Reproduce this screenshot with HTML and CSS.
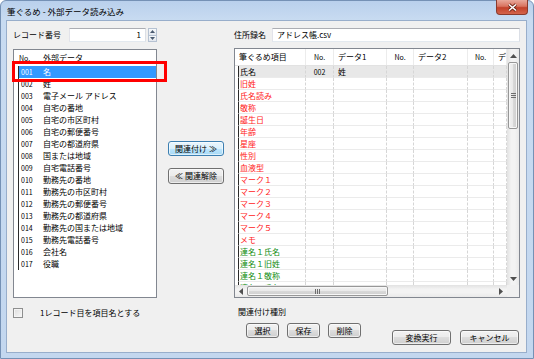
FILE: index.html
```html
<!DOCTYPE html>
<html lang="ja">
<head>
    <meta charset="UTF-8">
    <meta name="viewport" content="width=device-width, initial-scale=1.0">
    <title>筆ぐるめ - 外部データ読み込み</title>
    <link rel="stylesheet" href="styles.css">
</head>
<body>
    <div class="window">
        <div class="titlebar">
            <span class="title">筆ぐるめ - 外部データ読み込み</span>
            <div class="close-btn">
                <svg width="11" height="9" viewBox="0 0 11 9">
                    <path d="M2 1.5 L9 7.5 M9 1.5 L2 7.5" stroke="#6b2315" stroke-width="3.2"/>
                    <path d="M2 1.5 L9 7.5 M9 1.5 L2 7.5" stroke="#ffffff" stroke-width="1.6"/>
                </svg>
            </div>
        </div>

        <div class="client">
            <!-- 左: 外部データ -->
            <div class="col-left">
                <div class="field-row">
                    <span class="label rec-label">レコード番号</span>
                    <div class="textbox spin-value">1</div>
                    <div class="spin">
                        <div class="spin-btn"><svg width="5" height="3" viewBox="0 0 5 3"><path d="M0 3 L2.5 0 L5 3Z" fill="#4a5a70"/></svg></div>
                        <div class="spin-btn"><svg width="5" height="3" viewBox="0 0 5 3"><path d="M0 0 L2.5 3 L5 0Z" fill="#4a5a70"/></svg></div>
                    </div>
                </div>

                <div class="listbox">
                    <div class="lb-head"><span class="lb-no">No.</span><span class="lb-name">外部データ</span></div>
                    <div class="lb-row selected"><span class="lb-no">001</span><span class="lb-name">名</span></div>
                    <div class="lb-row"><span class="lb-no">002</span><span class="lb-name">姓</span></div>
                    <div class="lb-row"><span class="lb-no">003</span><span class="lb-name">電子メール アドレス</span></div>
                    <div class="lb-row"><span class="lb-no">004</span><span class="lb-name">自宅の番地</span></div>
                    <div class="lb-row"><span class="lb-no">005</span><span class="lb-name">自宅の市区町村</span></div>
                    <div class="lb-row"><span class="lb-no">006</span><span class="lb-name">自宅の郵便番号</span></div>
                    <div class="lb-row"><span class="lb-no">007</span><span class="lb-name">自宅の都道府県</span></div>
                    <div class="lb-row"><span class="lb-no">008</span><span class="lb-name">国または地域</span></div>
                    <div class="lb-row"><span class="lb-no">009</span><span class="lb-name">自宅電話番号</span></div>
                    <div class="lb-row"><span class="lb-no">010</span><span class="lb-name">勤務先の番地</span></div>
                    <div class="lb-row"><span class="lb-no">011</span><span class="lb-name">勤務先の市区町村</span></div>
                    <div class="lb-row"><span class="lb-no">012</span><span class="lb-name">勤務先の郵便番号</span></div>
                    <div class="lb-row"><span class="lb-no">013</span><span class="lb-name">勤務先の都道府県</span></div>
                    <div class="lb-row"><span class="lb-no">014</span><span class="lb-name">勤務先の国または地域</span></div>
                    <div class="lb-row"><span class="lb-no">015</span><span class="lb-name">勤務先電話番号</span></div>
                    <div class="lb-row"><span class="lb-no">016</span><span class="lb-name">会社名</span></div>
                    <div class="lb-row"><span class="lb-no">017</span><span class="lb-name">役職</span></div>
                    <div class="mark-box"></div>
                </div>

                <div class="check-row">
                    <span class="checkbox"></span>
                    <span class="check-label">1レコード目を項目名とする</span>
                </div>
            </div>

            <!-- 中央ボタン -->
            <div class="col-mid">
                <button type="button" class="btn btn-default btn-link">関連付け ≫</button>
                <button type="button" class="btn btn-unlink">≪ 関連解除</button>
            </div>

            <!-- 右: 筆ぐるめ項目 -->
            <div class="col-right">
                <div class="field-row">
                    <span class="label file-label">住所録名</span>
                    <div class="textbox file-name">アドレス帳.csv</div>
                </div>

                <div class="grid">
                    <div class="grid-body">
                        <div class="g-head">
                            <span class="cell c1">筆ぐるめ項目</span>
                            <span class="cell c2">No.</span>
                            <span class="cell c3">データ1</span>
                            <span class="cell c4">No.</span>
                            <span class="cell c5">データ2</span>
                            <span class="cell c6">No.</span>
                            <span class="cell c7">デ</span>
                        </div>
                        <div class="g-row current"><span class="cell c1">氏名</span><span class="cell c2">002</span><span class="cell c3">姓</span><span class="cell c4"></span><span class="cell c5"></span><span class="cell c6"></span><span class="cell c7"></span></div>
                        <div class="g-row red"><span class="cell c1">旧姓</span><span class="cell c2"></span><span class="cell c3"></span><span class="cell c4"></span><span class="cell c5"></span><span class="cell c6"></span><span class="cell c7"></span></div>
                        <div class="g-row red"><span class="cell c1">氏名読み</span><span class="cell c2"></span><span class="cell c3"></span><span class="cell c4"></span><span class="cell c5"></span><span class="cell c6"></span><span class="cell c7"></span></div>
                        <div class="g-row red"><span class="cell c1">敬称</span><span class="cell c2"></span><span class="cell c3"></span><span class="cell c4"></span><span class="cell c5"></span><span class="cell c6"></span><span class="cell c7"></span></div>
                        <div class="g-row red"><span class="cell c1">誕生日</span><span class="cell c2"></span><span class="cell c3"></span><span class="cell c4"></span><span class="cell c5"></span><span class="cell c6"></span><span class="cell c7"></span></div>
                        <div class="g-row red"><span class="cell c1">年齢</span><span class="cell c2"></span><span class="cell c3"></span><span class="cell c4"></span><span class="cell c5"></span><span class="cell c6"></span><span class="cell c7"></span></div>
                        <div class="g-row red"><span class="cell c1">星座</span><span class="cell c2"></span><span class="cell c3"></span><span class="cell c4"></span><span class="cell c5"></span><span class="cell c6"></span><span class="cell c7"></span></div>
                        <div class="g-row red"><span class="cell c1">性別</span><span class="cell c2"></span><span class="cell c3"></span><span class="cell c4"></span><span class="cell c5"></span><span class="cell c6"></span><span class="cell c7"></span></div>
                        <div class="g-row red"><span class="cell c1">血液型</span><span class="cell c2"></span><span class="cell c3"></span><span class="cell c4"></span><span class="cell c5"></span><span class="cell c6"></span><span class="cell c7"></span></div>
                        <div class="g-row red"><span class="cell c1">マーク１</span><span class="cell c2"></span><span class="cell c3"></span><span class="cell c4"></span><span class="cell c5"></span><span class="cell c6"></span><span class="cell c7"></span></div>
                        <div class="g-row red"><span class="cell c1">マーク２</span><span class="cell c2"></span><span class="cell c3"></span><span class="cell c4"></span><span class="cell c5"></span><span class="cell c6"></span><span class="cell c7"></span></div>
                        <div class="g-row red"><span class="cell c1">マーク３</span><span class="cell c2"></span><span class="cell c3"></span><span class="cell c4"></span><span class="cell c5"></span><span class="cell c6"></span><span class="cell c7"></span></div>
                        <div class="g-row red"><span class="cell c1">マーク４</span><span class="cell c2"></span><span class="cell c3"></span><span class="cell c4"></span><span class="cell c5"></span><span class="cell c6"></span><span class="cell c7"></span></div>
                        <div class="g-row red"><span class="cell c1">マーク５</span><span class="cell c2"></span><span class="cell c3"></span><span class="cell c4"></span><span class="cell c5"></span><span class="cell c6"></span><span class="cell c7"></span></div>
                        <div class="g-row red"><span class="cell c1">メモ</span><span class="cell c2"></span><span class="cell c3"></span><span class="cell c4"></span><span class="cell c5"></span><span class="cell c6"></span><span class="cell c7"></span></div>
                        <div class="g-row green"><span class="cell c1">連名１氏名</span><span class="cell c2"></span><span class="cell c3"></span><span class="cell c4"></span><span class="cell c5"></span><span class="cell c6"></span><span class="cell c7"></span></div>
                        <div class="g-row green"><span class="cell c1">連名１旧姓</span><span class="cell c2"></span><span class="cell c3"></span><span class="cell c4"></span><span class="cell c5"></span><span class="cell c6"></span><span class="cell c7"></span></div>
                        <div class="g-row green"><span class="cell c1">連名１敬称</span><span class="cell c2"></span><span class="cell c3"></span><span class="cell c4"></span><span class="cell c5"></span><span class="cell c6"></span><span class="cell c7"></span></div>
                        <div class="g-row green"><span class="cell c1">連名２氏名</span><span class="cell c2"></span><span class="cell c3"></span><span class="cell c4"></span><span class="cell c5"></span><span class="cell c6"></span><span class="cell c7"></span></div>
                    </div>

                    <div class="vscroll">
                        <div class="sb-arrow"><svg width="7" height="4" viewBox="0 0 7 4"><path d="M0 4 L3.5 0 L7 4Z" fill="#505050"/></svg></div>
                        <div class="thumb v-thumb">
                            <svg width="5" height="5" viewBox="0 0 5 5"><path d="M0 0.5 H5 M0 2.5 H5 M0 4.5 H5" stroke="#6e6e6e" stroke-width="1"/></svg>
                        </div>
                        <div class="sb-space"></div>
                        <div class="sb-arrow"><svg width="7" height="4" viewBox="0 0 7 4"><path d="M0 0 L3.5 4 L7 0Z" fill="#505050"/></svg></div>
                    </div>
                    <div class="hscroll">
                        <div class="sb-arrow"><svg width="4" height="7" viewBox="0 0 4 7"><path d="M4 0 L0 3.5 L4 7Z" fill="#505050"/></svg></div>
                        <div class="thumb h-thumb">
                            <svg width="5" height="5" viewBox="0 0 5 5"><path d="M0.5 0 V5 M2.5 0 V5 M4.5 0 V5" stroke="#6e6e6e" stroke-width="1"/></svg>
                        </div>
                        <div class="sb-space"></div>
                        <div class="sb-arrow"><svg width="4" height="7" viewBox="0 0 4 7"><path d="M0 0 L4 3.5 L0 7Z" fill="#505050"/></svg></div>
                    </div>
                    <div class="corner"></div>
                </div>

                <div class="bottom">
                    <div class="link-group">
                        <div class="group-label">関連付け種別</div>
                        <div class="btn-row">
                            <button type="button" class="btn btn-small">選択</button>
                            <button type="button" class="btn btn-small">保存</button>
                            <button type="button" class="btn btn-small">削除</button>
                        </div>
                    </div>
                    <div class="action-row">
                        <button type="button" class="btn btn-wide">変換実行</button>
                        <button type="button" class="btn btn-wide">キャンセル</button>
                    </div>
                </div>
            </div>
        </div>
    </div>
</body>
</html>
```

FILE: styles.css
```css
* {
    box-sizing: border-box;
}

body {
    margin: 0;
    width: 534px;
    height: 359px;
    overflow: hidden;
    font-family: "Noto Sans CJK JP", "Liberation Sans", sans-serif;
    font-size: 8px;
    color: #000000;
    background-color: #ffffff;
}

/* ウィンドウ枠 */
.window {
    position: relative;
    width: 534px;
    height: 359px;
    display: flex;
    flex-direction: column;
    padding: 0 6px 5px 5px;
    border: 1px solid #7591b5;
    border-radius: 6px 6px 0 0;
    background: linear-gradient(to bottom, #b9d0ec 0, #c8dbf1 19px, #c3d7ef 100%);
}

.titlebar {
    height: 19px;
    display: flex;
    align-items: center;
    padding-left: 1px;
}

.title {
    font-size: 8.5px;
    line-height: 10px;
    margin-top: 1px;
}

.close-btn {
    position: absolute;
    top: -1px;
    right: 5px;
    width: 32px;
    height: 15px;
    display: flex;
    align-items: center;
    justify-content: center;
    border: 1px solid #8a3a2c;
    border-top: none;
    border-radius: 0 0 4px 4px;
    background: linear-gradient(to bottom, #e9a99b 0%, #d9735f 45%, #c2412a 55%, #d4644b 100%);
}

.client {
    flex: 1;
    display: flex;
    padding: 7px 6px 0 6px;
    border: 1px solid #98aecb;
    background-color: #f0f0f0;
}

.label {
    line-height: 10px;
    white-space: nowrap;
}

.field-row {
    display: flex;
    align-items: center;
    height: 14px;
}

.textbox {
    height: 14px;
    line-height: 12px;
    border: 1px solid;
    border-color: #abadb3 #dbdfe6 #e3e9ef #e2e3ea;
    background-color: #ffffff;
    white-space: nowrap;
}

/* 左カラム */
.col-left {
    width: 144px;
    display: flex;
    flex-direction: column;
}

.rec-label {
    width: 56px;
}

.spin-value {
    width: 77px;
    text-align: right;
    padding-right: 4px;
}

.spin {
    width: 9px;
    height: 14px;
    margin-left: 2px;
    display: flex;
    flex-direction: column;
}

.spin-btn {
    flex: 1;
    display: flex;
    align-items: center;
    justify-content: center;
    border: 1px solid #b6c2d2;
    background: linear-gradient(to bottom, #f7f9fb, #e3e8ef);
}

.spin-btn + .spin-btn {
    border-top: none;
}

.listbox {
    position: relative;
    margin-top: 7px;
    height: 249px;
    border: 1px solid #828790;
    background-color: #ffffff;
}

.lb-head {
    height: 16px;
    display: flex;
    align-items: center;
    padding-left: 5px;
    line-height: 10px;
}

.lb-head .lb-no {
    width: 24px;
    font-size: 7px;
}

.lb-row {
    height: 12px;
    display: flex;
    align-items: center;
    margin-left: 4px;
    padding-left: 2px;
    border-left: 1px solid #2a2a2a;
    line-height: 10px;
    white-space: nowrap;
}

.lb-row .lb-no {
    width: 22px;
    font-size: 7px;
}

.lb-row.selected {
    background-color: #3399ff;
    color: #ffffff;
}

/* 赤枠 */
.mark-box {
    position: absolute;
    left: -2px;
    top: 11px;
    width: 155px;
    height: 21px;
    border: 3px solid #ff0000;
}

.check-row {
    margin-top: 10px;
    height: 10px;
    display: flex;
    align-items: center;
}

.checkbox {
    width: 10px;
    height: 10px;
    border: 1px solid #8e8f8f;
    background: linear-gradient(to bottom right, #dcdcdc, #f8f8f8);
    box-shadow: inset 0 0 0 1px #f4f4f4;
}

.check-label {
    margin-left: 17px;
    line-height: 10px;
}

/* ボタン */
.btn {
    font-family: inherit;
    font-size: 8px;
    line-height: 10px;
    color: #000000;
    padding: 0;
    border: 1px solid #707070;
    border-radius: 3px;
    background: linear-gradient(to bottom, #f2f2f2 0%, #ebebeb 50%, #dddddd 50%, #cfcfcf 100%);
    box-shadow: inset 0 0 0 1px rgba(255, 255, 255, 0.6);
    white-space: nowrap;
}

.btn-default {
    border-color: #3c7fb1;
    background: linear-gradient(to bottom, #eaf6fd 0%, #d9f0fc 50%, #bee6fd 50%, #a7d9f5 100%);
}

.col-mid {
    width: 56px;
    margin-left: 11px;
    padding-top: 113px;
    display: flex;
    flex-direction: column;
}

.btn-link {
    height: 15px;
}

.btn-unlink {
    height: 16px;
    margin-top: 12px;
}

/* 右カラム */
.col-right {
    width: 286px;
    margin-left: 10px;
    display: flex;
    flex-direction: column;
}

.file-label {
    width: 38px;
}

.file-name {
    flex: 1;
    padding-left: 4px;
}

.grid {
    margin-top: 6px;
    height: 250px;
    display: grid;
    grid-template-columns: 1fr 12px;
    grid-template-rows: 1fr 12px;
    border: 1px solid #828790;
    background-color: #ffffff;
}

.grid-body {
    overflow: hidden;
}

.g-head {
    height: 17px;
    display: flex;
    border-bottom: 1px solid #e2e2e2;
}

.g-head .cell {
    display: flex;
    align-items: center;
    border-right: 1px solid #ececec;
}

.g-row {
    height: 12px;
    display: flex;
    padding-left: 3px;
}

.g-row .cell {
    display: flex;
    align-items: center;
    border-right: 1px dashed #d6d6d6;
    border-bottom: 1px solid #ebebeb;
}

.cell {
    line-height: 10px;
    white-space: nowrap;
    overflow: hidden;
}

.c1 {
    width: 71px;
    padding-left: 4px;
}

.g-row .c1 {
    width: 68px;
    padding-left: 1px;
    border-left: 1px solid #2a2a2a;
}

.c2,
.c4,
.c6 {
    justify-content: center;
    font-size: 7px;
}

.c2 {
    width: 28px;
}

.c3 {
    width: 53px;
    padding-left: 4px;
}

.c4 {
    width: 27px;
}

.c5 {
    width: 54px;
    padding-left: 4px;
}

.c6 {
    width: 26px;
}

.c7 {
    flex: 1;
    padding-left: 4px;
}

.g-row.current .cell {
    background-color: #e8e8e8;
}

.g-row.red .c1 {
    color: #ff1a1a;
}

.g-row.green .c1 {
    color: #118d11;
}

/* スクロールバー */
.vscroll {
    display: flex;
    flex-direction: column;
    background: linear-gradient(to right, #e2e2e2, #f3f3f3 35%, #f3f3f3 65%, #e9e9e9);
}

.hscroll {
    display: flex;
    background: linear-gradient(to bottom, #e2e2e2, #f3f3f3 35%, #f3f3f3 65%, #e9e9e9);
}

.sb-arrow {
    width: 12px;
    height: 12px;
    display: flex;
    align-items: center;
    justify-content: center;
}

.vscroll .sb-arrow:first-child {
    height: 13px;
}

.sb-space {
    flex: 1;
}

.thumb {
    display: flex;
    align-items: center;
    justify-content: center;
    border: 1px solid #979797;
    border-radius: 2px;
    box-shadow: inset 0 0 0 1px #f7f7f7;
}

.v-thumb {
    height: 67px;
    margin: 0 1px;
    background: linear-gradient(to right, #f2f2f2, #e9e9e9 50%, #d9d9d9 50%, #cfcfcf);
}

.h-thumb {
    width: 141px;
    margin: 1px 0;
    background: linear-gradient(to bottom, #f2f2f2, #e9e9e9 50%, #d9d9d9 50%, #cfcfcf);
}

.corner {
    background-color: #f0f0f0;
}

/* 下部 */
.bottom {
    flex: 1;
    display: flex;
}

.link-group {
    width: 136px;
    padding-left: 4px;
}

.group-label {
    margin-top: 9px;
    line-height: 10px;
}

.btn-row {
    margin-top: 6px;
    padding-left: 8px;
    display: flex;
    gap: 8px;
}

.btn-small {
    width: 33px;
    height: 15px;
}

.action-row {
    margin-left: auto;
    margin-right: 1px;
    margin-top: 32px;
    display: flex;
    gap: 9px;
    align-self: flex-start;
}

.btn-wide {
    width: 59px;
    height: 15px;
}
```
